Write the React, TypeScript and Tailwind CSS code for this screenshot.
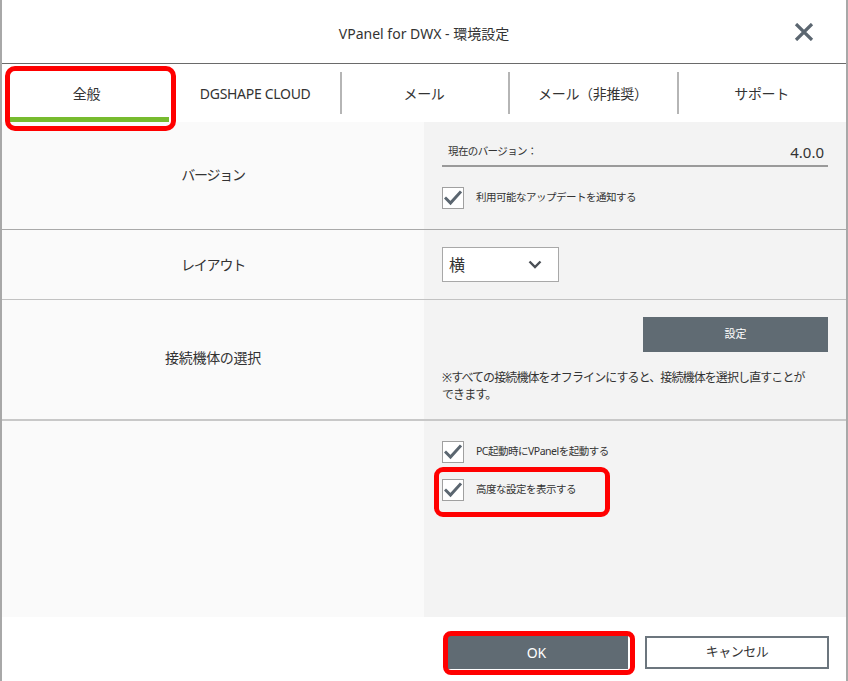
import React from 'react';

const FONT = { fontFamily: '"Noto Sans", "Noto Sans CJK JP", sans-serif' };

function Check({ label }: { label: string }) {
  return (
    <div className="flex items-center gap-[12px]">
      <div className="w-[22px] h-[22px] bg-white border border-[#a0a0a0] flex items-center justify-center">
        <svg width="18" height="16" viewBox="0 0 18 16">
          <path d="M2 8.5 L6.5 13 L16 2.5" fill="none" stroke="#5b6670" strokeWidth="3" strokeLinecap="square" />
        </svg>
      </div>
      <span className="text-[10.5px] tracking-[-0.5px] text-[#333]">{label}</span>
    </div>
  );
}

export default function App() {
  const tabs = ['全般', 'DGSHAPE CLOUD', 'メール', 'メール（非推奨）', 'サポート'];

  return (
    <div className="relative w-[848px] h-[681px] bg-white border-l-2 border-r-2 border-[#a8a8a8] overflow-hidden" style={FONT}>
      {/* title bar */}
      <div className="relative h-[64px] flex items-center justify-center border-b border-[#6a6a6a]">
        <span className="text-[14px] text-[#333] pt-[4px]">VPanel for DWX - 環境設定</span>
        <svg className="absolute right-[32px] top-[23px]" width="20" height="18" viewBox="0 0 20 18">
          <path d="M2 1 L18 17 M18 1 L2 17" stroke="#5b6670" strokeWidth="3.2" />
        </svg>
      </div>

      {/* tabs */}
      <div className="grid grid-cols-5 h-[58px]">
        {tabs.map((t, i) => (
          <div key={t} className="relative flex items-center justify-center">
            {i > 1 && <div className="absolute left-0 top-[8px] bottom-[8px] w-[2px] bg-[#b5b5b5]" />}
            <span className="text-[14px] tracking-[-0.3px] text-[#333]">{t}</span>
            {i === 0 && <div className="absolute left-[5px] right-[2px] bottom-0 h-[5px] bg-[#77bb2f]" />}
          </div>
        ))}
      </div>

      {/* row: version */}
      <div className="grid grid-cols-[422px_1fr] h-[108px] border-b border-[#a9a9a9]">
        <div className="bg-[#fafafa] flex items-center justify-center text-[14px] tracking-[-1.2px] text-[#333] pb-[2px]">バージョン</div>
        <div className="bg-[#f3f3f3] pl-[18px] pr-[18px] pt-[22px]">
          <div className="flex items-end justify-between border-b-2 border-[#9a9a9a] pl-[6px] pb-[5px] pr-[4px]">
            <span className="text-[10.5px] tracking-[-0.6px] text-[#333]">現在のバージョン：</span>
            <span className="text-[15px] text-[#333] leading-none">4.0.0</span>
          </div>
          <div className="mt-[20px]">
            <Check label="利用可能なアップデートを通知する" />
          </div>
        </div>
      </div>

      {/* row: layout */}
      <div className="grid grid-cols-[422px_1fr] h-[70px] border-b border-[#c2c2c2]">
        <div className="bg-[#fafafa] flex items-center justify-center text-[14px] tracking-[-1.2px] text-[#333]">レイアウト</div>
        <div className="bg-[#f3f3f3] pl-[18px] flex items-center">
          <div className="w-[117px] h-[35px] bg-white border border-[#a8a8a8] flex items-center justify-between pl-[6px] pr-[16px]">
            <span className="text-[16px] text-[#333]">横</span>
            <svg width="14" height="9" viewBox="0 0 14 9">
              <path d="M1.5 1.5 L7 7 L12.5 1.5" fill="none" stroke="#4a4f55" strokeWidth="2.4" />
            </svg>
          </div>
        </div>
      </div>

      {/* row: device */}
      <div className="grid grid-cols-[422px_1fr] h-[121px] border-b-2 border-[#c8c8c8]">
        <div className="bg-[#fafafa] flex items-center justify-center text-[14px] tracking-[-0.3px] text-[#333] pb-[4px]">接続機体の選択</div>
        <div className="bg-[#f3f3f3] pl-[18px] pr-[10px] pt-[17px]">
          <div className="flex justify-end pr-[8px]">
            <div className="w-[185px] h-[35px] bg-[#606b73] flex items-center justify-center text-[11px] text-white">設定</div>
          </div>
          <p className="mt-[17px] text-[12px] tracking-[-0.9px] leading-[17px] text-[#333] whitespace-nowrap">
            ※すべての接続機体をオフラインにすると、接続機体を選択し直すことが<br />できます。
          </p>
        </div>
      </div>

      {/* row: misc */}
      <div className="grid grid-cols-[422px_1fr] h-[196px]">
        <div className="bg-[#fafafa]" />
        <div className="bg-[#f3f3f3] pl-[18px] pt-[20px] flex flex-col gap-[16px]">
          <Check label="PC起動時にVPanelを起動する" />
          <Check label="高度な設定を表示する" />
        </div>
      </div>

      {/* footer */}
      <div className="flex items-center justify-end gap-[17px] pr-[17px] pt-[7px] h-[63px]">
        <div className="w-[183px] h-[34px] bg-[#606b73] flex items-center justify-center text-[14px] text-white">OK</div>
        <div className="w-[184px] h-[33px] bg-white border-2 border-[#6c767e] flex items-center justify-center text-[13px] tracking-[-0.5px] text-[#333]">キャンセル</div>
      </div>

      {/* red highlight overlays */}
      <div className="absolute left-[3px] top-[66px] w-[171px] h-[65px] border-[5px] border-[#ff0000] rounded-[10px]" />
      <div className="absolute left-[432px] top-[467px] w-[176px] h-[50px] border-[5px] border-[#ff0000] rounded-[9px]" />
      <div className="absolute left-[441px] top-[631px] w-[192px] h-[44px] border-[5px] border-[#ff0000] rounded-[8px]" />
    </div>
  );
}
